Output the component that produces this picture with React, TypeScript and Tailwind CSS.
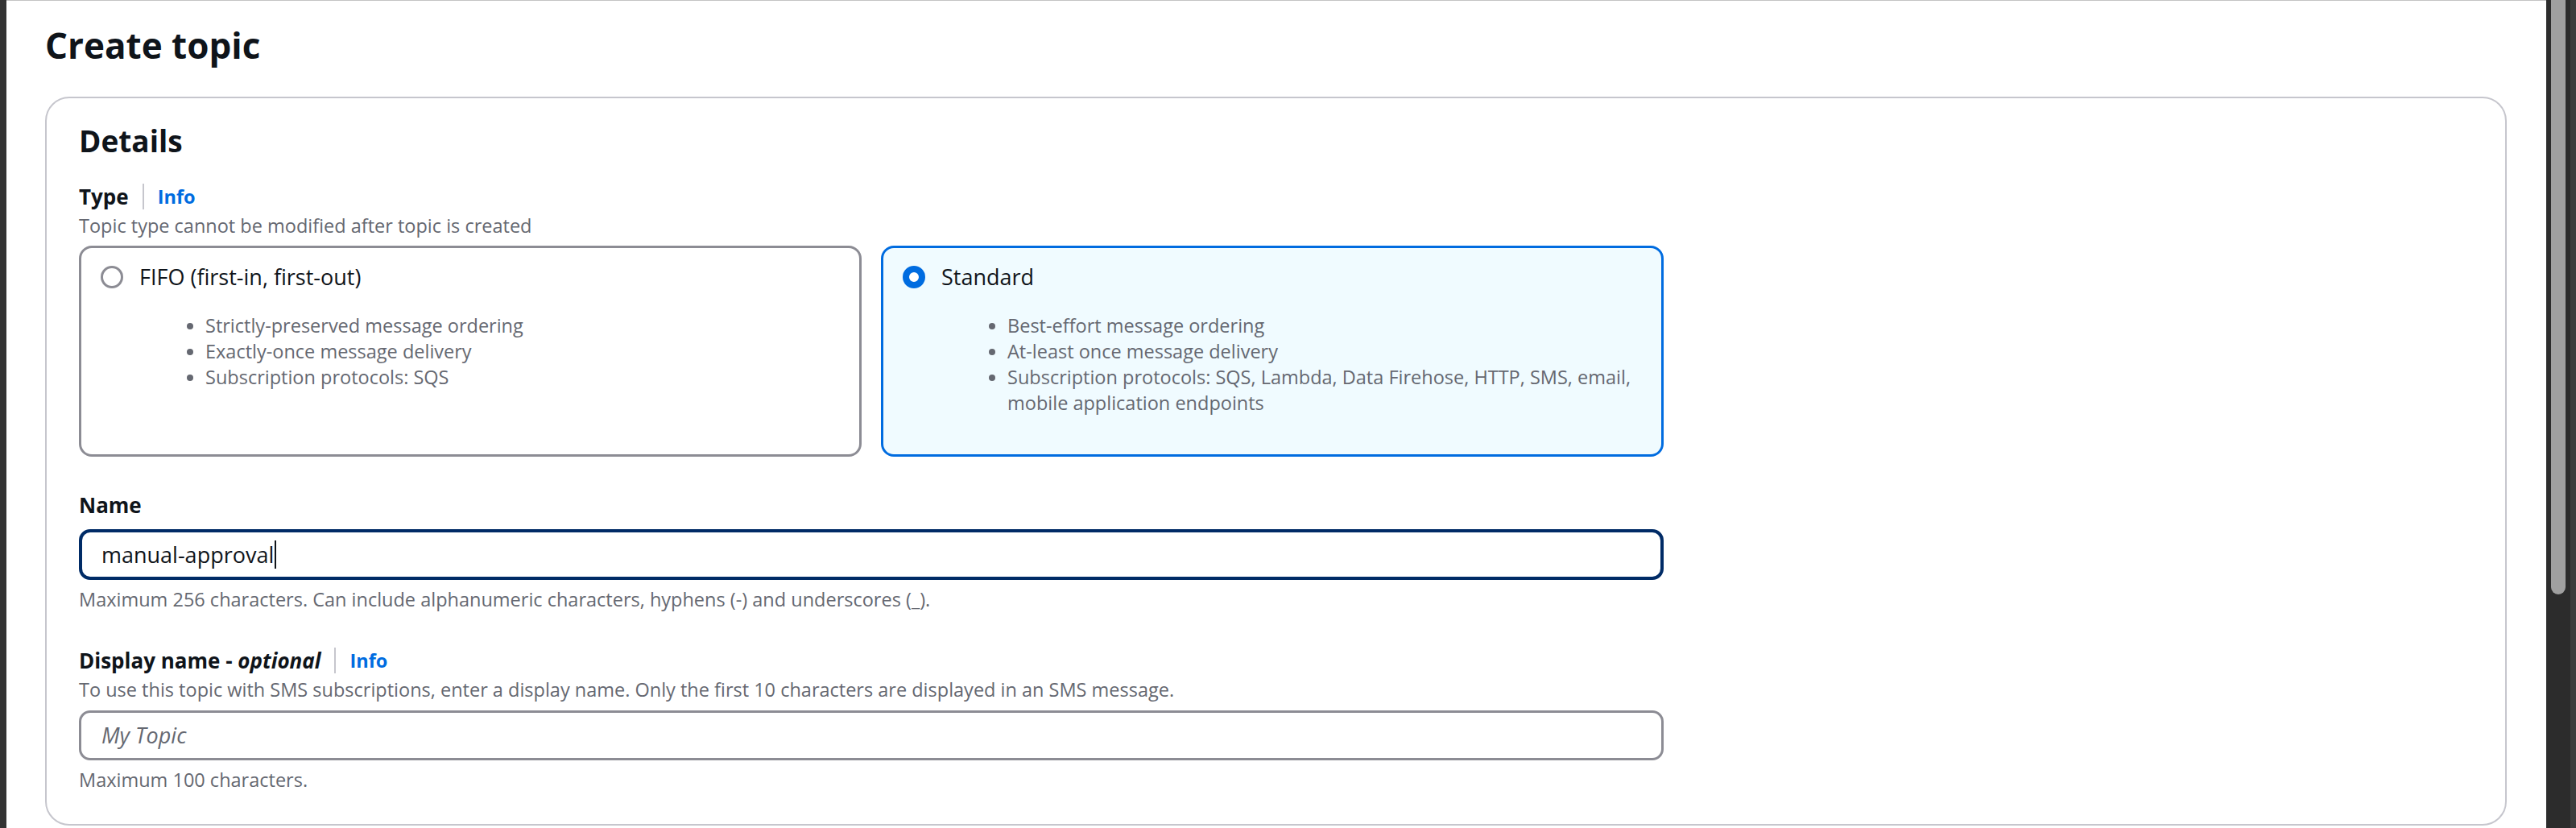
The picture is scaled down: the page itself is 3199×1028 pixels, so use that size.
import React from 'react'

const fifoPoints = [
  "Strictly-preserved message ordering",
  "Exactly-once message delivery",
  "Subscription protocols: SQS",
];

function Radio({ checked }: { checked: boolean }) {
  if (checked) {
    return <span className="block h-[28px] w-[28px] shrink-0 rounded-full border-[8px] border-[#006ce0] bg-white" />;
  }
  return <span className="block h-[28px] w-[28px] shrink-0 rounded-full border-[3px] border-[#8c8c94] bg-white" />;
}

function Tile({ checked, label, children }: { checked: boolean; label: string; children: React.ReactNode }) {
  return (
    <div
      className={
        checked
          ? "rounded-[16px] border-[3px] border-[#006ce0] bg-[#f0fbff] pl-[24px] pr-[20px] pt-[18px] pb-[48px]"
          : "rounded-[16px] border-[3px] border-[#8c8c94] bg-white pl-[24px] pr-[20px] pt-[18px] pb-[48px]"
      }
    >
      <div className="flex h-[36px] items-center gap-[20px]">
        <Radio checked={checked} />
        <span className="text-[27px] leading-[36px] text-[#0f141a]">{label}</span>
      </div>
      <ul className="mt-[26px] list-disc pl-[130px] text-[23.5px] leading-[32px] text-[#656871]">
        {children}
      </ul>
    </div>
  );
}

function Label({ children }: { children: React.ReactNode }) {
  return (
    <div className="flex h-[36px] items-center">
      <span className="text-[26px] font-bold leading-[36px] text-[#0f141a]">{children}</span>
    </div>
  );
}

function LabelInfo({ children }: { children: React.ReactNode }) {
  return (
    <div className="flex h-[36px] items-center">
      <span className="text-[26px] font-bold leading-[36px] text-[#0f141a]">{children}</span>
      <span className="mx-[17px] h-[32px] w-[2px] bg-[#c6c6cd]" />
      <span className="text-[23.5px] font-bold leading-[36px] text-[#006ce0]">Info</span>
    </div>
  );
}

function Small({ className = "", children }: { className?: string; children: React.ReactNode }) {
  return <p className={"text-[23.5px] leading-[32px] text-[#656871] " + className}>{children}</p>;
}

export default function App() {
  return (
    <div className="flex h-[1028px] w-full overflow-hidden bg-white font-['Open_Sans',sans-serif]">
      <div className="w-[8px] shrink-0 bg-[#333333]" />

      <main className="min-w-0 flex-1 border-t border-[#c4c4c4] pl-[48px] pr-[49px]">
        <h1 className="pt-[27px] text-[44px] font-bold leading-[56px] text-[#0f141a]">Create topic</h1>

        <section className="mt-[36px] rounded-[30px] border-2 border-[#c6c6cd] pl-[40px] pr-[40px] pt-[29px] pb-[39px]">
          <h2 className="text-[37px] font-bold leading-[48px] text-[#0f141a]">Details</h2>

          <div className="max-w-[1968px]">
            <div className="mt-[27px]">
              <LabelInfo>Type</LabelInfo>
            </div>
            <Small className="mt-[2px]">Topic type cannot be modified after topic is created</Small>

            <div className="mt-[9px] grid grid-cols-2 gap-[24px]">
              <Tile checked={false} label="FIFO (first-in, first-out)">
                {fifoPoints.map((p) => (
                  <li key={p}>{p}</li>
                ))}
              </Tile>
              <Tile checked={true} label="Standard">
                <li>Best-effort message ordering</li>
                <li>At-least once message delivery</li>
                <li>
                  Subscription protocols: SQS, Lambda, Data Firehose, HTTP, SMS, email,
                  <br />
                  mobile application endpoints
                </li>
              </Tile>
            </div>

            <div className="mt-[42px]">
              <Label>Name</Label>
            </div>
            <div className="mt-[12px] flex h-[63px] items-center rounded-[14px] border-[4px] border-[#002b66] bg-white pl-[24px]">
              <span className="text-[27px] leading-[36px] text-[#0f141a]">manual-approval</span>
              <span className="ml-[1px] h-[35px] w-[2px] bg-[#0f141a]" />
            </div>
            <Small className="mt-[8px]">
              Maximum 256 characters. Can include alphanumeric characters, hyphens (-) and underscores (_).
            </Small>

            <div className="mt-[42px]">
              <LabelInfo>
                Display name - <i>optional</i>
              </LabelInfo>
            </div>
            <Small className="mt-[2px]">
              To use this topic with SMS subscriptions, enter a display name. Only the first 10 characters are displayed in an SMS message.
            </Small>
            <div className="mt-[10px] flex h-[62px] items-center rounded-[14px] border-[3px] border-[#8c8c94] bg-white pl-[25px]">
              <span className="text-[27px] italic leading-[36px] text-[#656871]">My Topic</span>
            </div>
            <Small className="mt-[8px]">Maximum 100 characters.</Small>
          </div>
        </section>
      </main>

      <div className="flex w-[37px] shrink-0">
        <div className="w-[30px] bg-[#2c2c2c] pl-[6px]">
          <div className="h-[738px] w-[18px] rounded-b-full bg-[#a0a0a0]" />
        </div>
        <div className="w-[7px] bg-[#3c3c3c]" />
      </div>
    </div>
  );
}
